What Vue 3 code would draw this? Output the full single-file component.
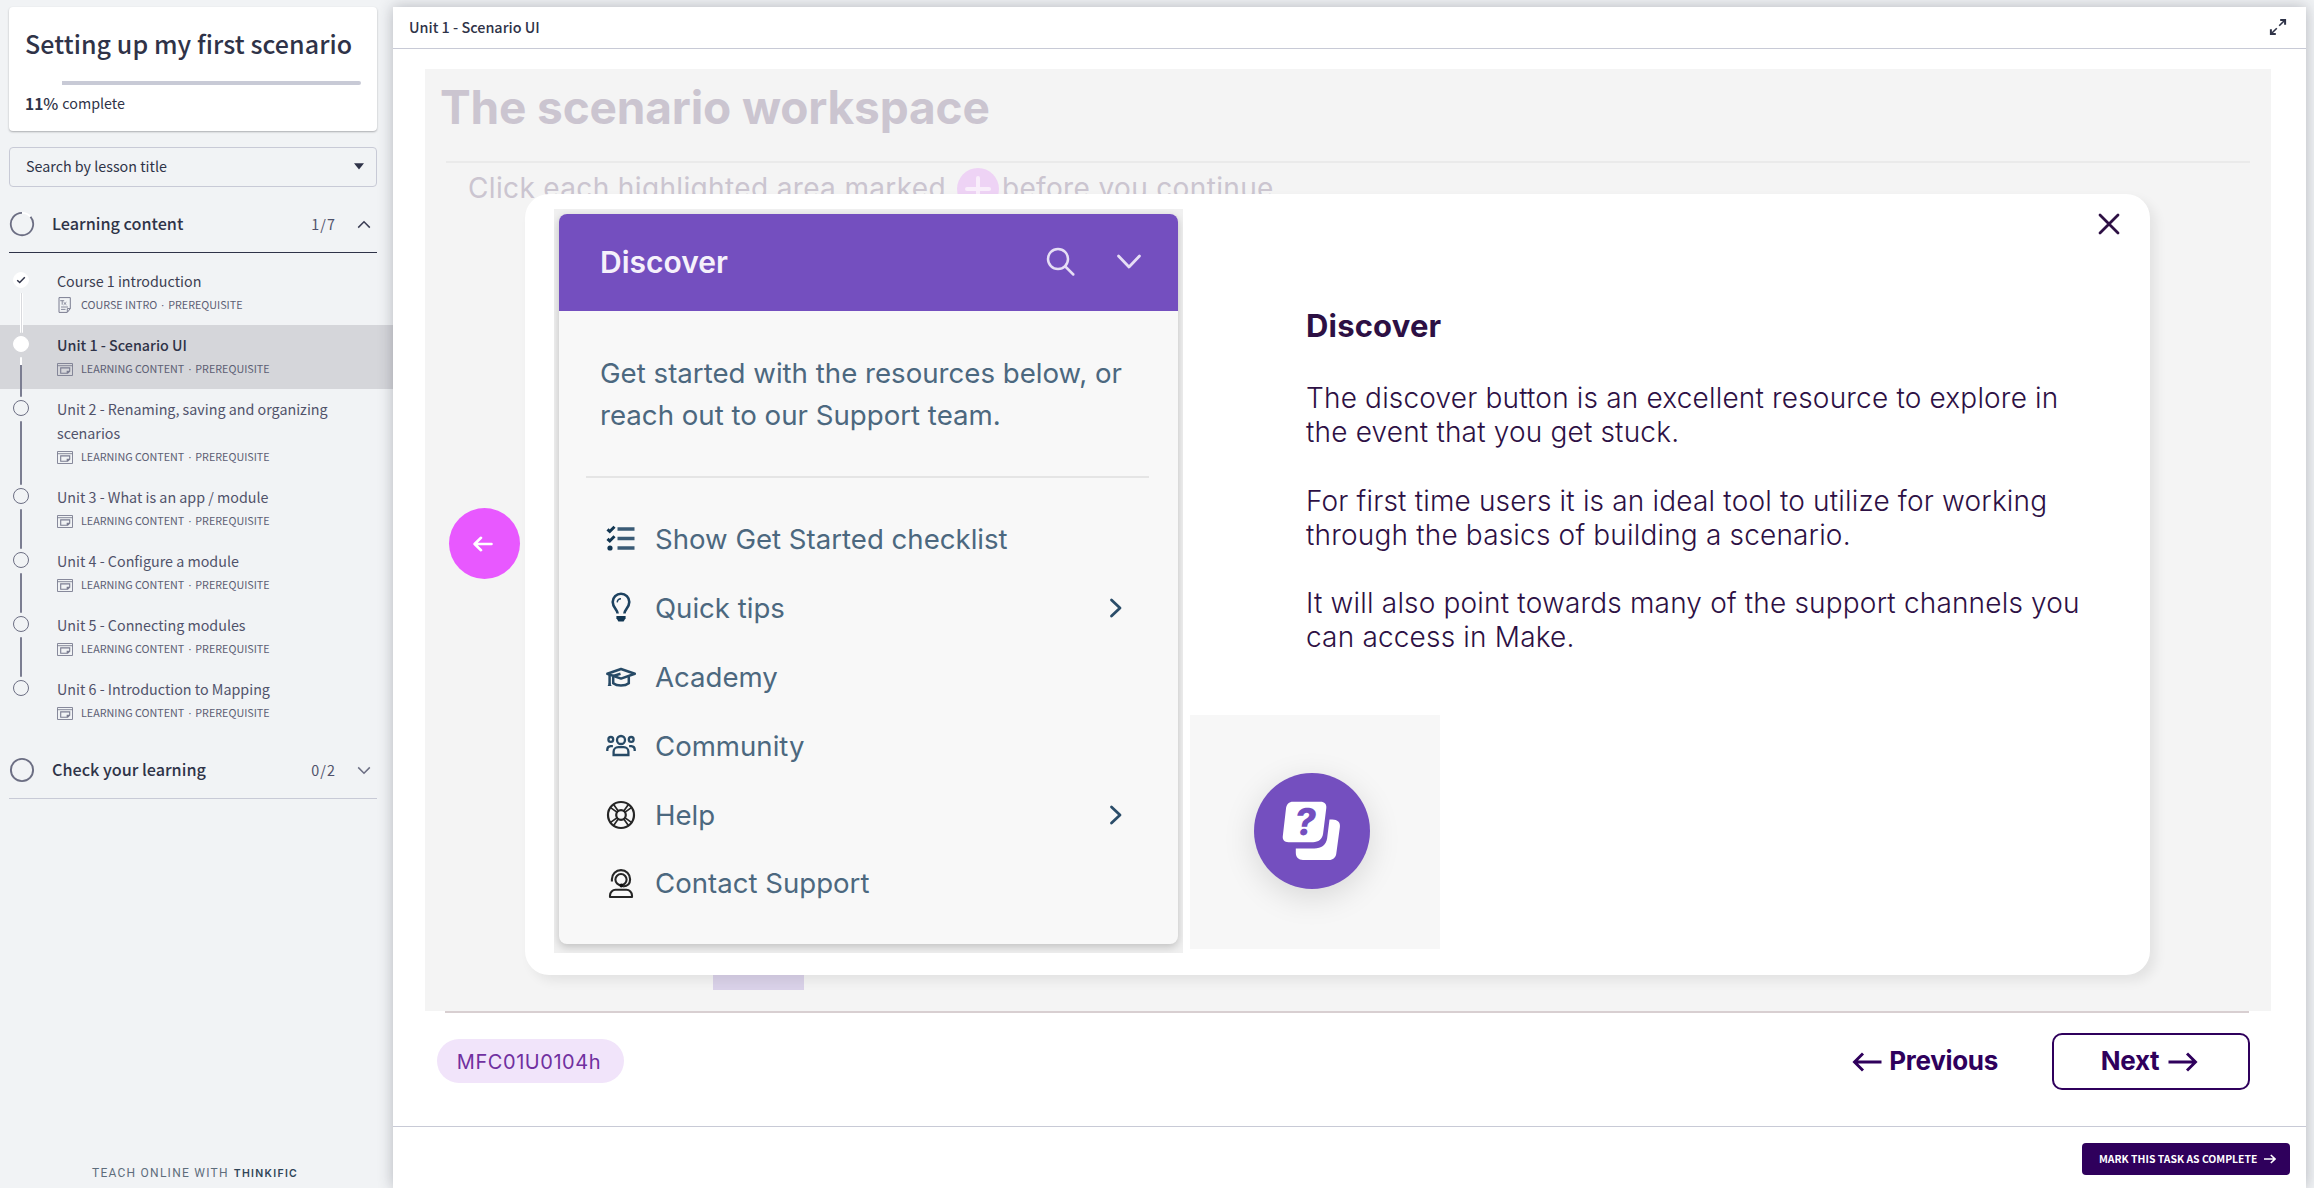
<script setup>
const lessons = [
  { title: 'Course 1 introduction', kind: 'COURSE INTRO', state: 'done' },
  { title: 'Unit 1 - Scenario UI', kind: 'LEARNING CONTENT', state: 'current' },
  { title: 'Unit 2 - Renaming, saving and organizing scenarios', kind: 'LEARNING CONTENT', state: 'open' },
  { title: 'Unit 3 - What is an app / module', kind: 'LEARNING CONTENT', state: 'open' },
  { title: 'Unit 4 - Configure a module', kind: 'LEARNING CONTENT', state: 'open' },
  { title: 'Unit 5 - Connecting modules', kind: 'LEARNING CONTENT', state: 'open' },
  { title: 'Unit 6 - Introduction to Mapping', kind: 'LEARNING CONTENT', state: 'open' }
]

const resources = [
  { label: 'Show Get Started checklist', icon: 'checklist', more: false },
  { label: 'Quick tips', icon: 'bulb', more: true },
  { label: 'Academy', icon: 'academy', more: false },
  { label: 'Community', icon: 'community', more: false },
  { label: 'Help', icon: 'help', more: true },
  { label: 'Contact Support', icon: 'support', more: false }
]
</script>

<template>
  <div class="page">
    <aside class="sidebar">
      <section class="card">
        <h1 class="course">Setting up my first scenario</h1>
        <div class="progress"><div class="progress-rest"></div></div>
        <p class="percent"><b>11</b><span class="sign">%</span><span>complete</span></p>
      </section>

      <div class="search">
        <span>Search by lesson title</span>
        <svg width="10" height="7" viewBox="0 0 10 7"><path d="M0 .3h10L5 6.6z" fill="#2f3348" /></svg>
      </div>

      <header class="chapter chapter-open">
        <svg class="ring" width="26" height="26" viewBox="0 0 26 26">
          <path d="M13 1.8A11.2 11.2 0 1 0 21.4 5.6" fill="none" stroke="#6c6e83" stroke-width="1.8" />
          <path d="M13 1.8A11.2 11.2 0 0 1 21.4 5.6" fill="none" stroke="#fff" stroke-width="1.8" />
        </svg>
        <h2>Learning content</h2>
        <span class="count">1/7</span>
        <svg width="14" height="9" viewBox="0 0 14 9"><path d="M1.2 7.6 7 1.8l5.8 5.8" fill="none" stroke="#3c3e55" stroke-width="1.5" /></svg>
      </header>

      <ul class="lessons">
        <li v-for="(l, i) in lessons" :key="l.title" class="lesson" :class="l.state">
          <div class="rail">
            <span class="dot">
              <svg v-if="l.state === 'done'" width="10" height="8" viewBox="0 0 10 8"><path d="M1.2 4.2 3.7 6.5 8.8 1.3" fill="none" stroke="#2f3348" stroke-width="1.5" /></svg>
            </span>
            <span v-if="i < lessons.length - 1" class="track"></span>
          </div>
          <div class="info">
            <div class="title">{{ l.title }}</div>
            <div class="meta">
              <svg v-if="i === 0" width="16" height="16" viewBox="0 0 16 16" fill="none" stroke="#7b7d91">
                <path d="M2 .6h11.3v11l-3 3.8H2z M10.3 15v-3.4h3" />
                <path d="M3.2 3.7h4M5.2 3.7v4M6.600 5.2l2.8 2.6M9.4 5.2 6.6 7.8M4 10h7M4 12.4h4.5" stroke-width=".9" />
              </svg>
              <svg v-else width="16" height="13" viewBox="0 0 16 13" fill="none" stroke="#7b7d91">
                <path d="M.5.5h15v12H.5zM.5 2.7h15" stroke-width=".9" />
                <path d="M3.7 4.9h9v3.4l-2 1.9h-7zM10.2 10.2V8.4h2.4" stroke-width="1.1" />
              </svg>
              <span>{{ l.kind }}</span><i class="sep">·</i><span>PREREQUISITE</span>
            </div>
          </div>
        </li>
      </ul>

      <header class="chapter chapter-closed">
        <svg class="ring" width="26" height="26" viewBox="0 0 26 26"><circle cx="13" cy="13" r="11.1" fill="none" stroke="#6c6e83" stroke-width="1.9" /></svg>
        <h2>Check your learning</h2>
        <span class="count">0/2</span>
        <svg width="14" height="9" viewBox="0 0 14 9"><path d="M1.2 1.4 7 7.2l5.8-5.8" fill="none" stroke="#6c6e83" stroke-width="1.5" /></svg>
      </header>

      <p class="brand"><span>TEACH ONLINE WITH</span><b>THINKIFIC</b></p>
    </aside>

    <main class="main">
      <header class="topbar">
        <span>Unit 1 - Scenario UI</span>
        <svg width="18" height="18" viewBox="0 0 18 18" fill="none" stroke="#2f3348" stroke-width="1.6">
          <path d="M10.2 7.8 15.8 2.2M2.2 15.8l5.6-5.6" /><path d="M11.2 1.9h4.9v4.9M1.9 11.2v4.9h4.9" stroke-width="2" />
        </svg>
      </header>

      <section class="slide">
        <h2 class="heading">The scenario workspace</h2>
        <div class="rule"></div>
        <p class="hint">
          <span>Click each highlighted area marked</span>
          <svg width="42" height="42" viewBox="0 0 42 42"><circle cx="21" cy="21" r="21" fill="#eed3f5" /><path d="M21 10v22M10 21h22" stroke="#f9eefb" stroke-width="4" stroke-linecap="round" /></svg>
          <span>before you continue</span>
        </p>
        <div class="strip"></div>

        <button class="back" aria-label="Back">
          <svg width="20" height="16" viewBox="0 0 20 16" fill="none" stroke="#fff" stroke-width="2.6" stroke-linecap="round" stroke-linejoin="round"><path d="M18.5 8H2M8 1.8 1.6 8 8 14.2" /></svg>
        </button>

        <div class="modal">
          <div class="frame">
            <div class="panel">
              <div class="panel-head">
                <h3>Discover</h3>
                <svg width="30" height="30" viewBox="0 0 30 30" fill="none" stroke="#e6def5" stroke-width="2.5" stroke-linecap="round"><circle cx="12" cy="12" r="10" /><path d="m19.300 19.500 8 8" /></svg>
                <svg width="26" height="16" viewBox="0 0 26 16" fill="none" stroke="#e6def5" stroke-width="2.800" stroke-linecap="round" stroke-linejoin="round"><path d="M2.500 2 13 13 23.500 2" /></svg>
              </div>
              <p class="intro">Get started with the resources below, or<br />reach out to our Support team.</p>
              <div class="divider"></div>
              <ul class="resources">
                <li v-for="r in resources" :key="r.label">
                  <svg class="icon" width="32" height="32" viewBox="0 0 32 32" fill="none" stroke="#274a66" stroke-width="2.2">
                    <g v-if="r.icon === 'checklist'">
                      <path d="M12.5 6h17M12.5 15.500h17M12.5 25h17" stroke="#3a5b76" stroke-width="3.300" />
                      <path d="m2.500 6.300 2.300 2.200L9.500 3.800M2.500 15.800 4.800 18l4.700-4.700" stroke="#123652" stroke-width="3" />
                      <circle cx="5" cy="25" r="2.600" fill="#123652" stroke="none" />
                    </g>
                    <g v-else-if="r.icon === 'bulb'" stroke="#1d4260">
                      <path d="M12.6 21.5c0-3.5-4.900-6-4.900-11.500a8.300 8.300 0 0 1 16.600 0c0 5.500-4.900 8-4.900 11.500" stroke-width="2.600" />
                      <path d="M12.200 10.400A4 4 0 0 1 16 6.700" stroke-width="1.500" />
                      <path d="M11.400 24h9.200v2.200l-2 3.400h-5.200l-2-3.400z" fill="#123652" stroke="none" />
                    </g>
                    <g v-else-if="r.icon === 'academy'" stroke-width="2.500">
                      <path d="M2.300 12.800 16 8l13.800 4.800L16 17.600z" stroke-linejoin="round" />
                      <path d="M8.200 15.400v6.800c3.800 3 11.800 3 15.600 0v-6.800M4.600 14v9.600M15.500 12.800 8.200 15" />
                      <path d="m4.600 20.400-2 4.600h4z" fill="#274a66" stroke="none" />
                    </g>
                    <g v-else-if="r.icon === 'community'" stroke-width="2.300">
                      <circle cx="16" cy="10" r="4" /><circle cx="5.800" cy="9.400" r="2.400" /><circle cx="26.200" cy="9.400" r="2.400" />
                      <path d="M8.600 25v-3.200a4.600 4.600 0 0 1 4.600-4.600h5.600a4.600 4.600 0 0 1 4.600 4.600V25zM2.300 21v-1.400c0-2 1-3.200 3.400-3.400h2.200M29.700 21v-1.400c0-2-1-3.200-3.400-3.400h-2.200" />
                    </g>
                    <g v-else-if="r.icon === 'help'" stroke="#262626" stroke-width="2.200">
                      <circle cx="16" cy="16" r="13" /><circle cx="16" cy="16" r="4.800" />
                      <path d="m5.600 8.600 7 5M8.600 5.600l5 7M26.400 8.600l-7 5M23.400 5.600l-5 7M5.600 23.400l7-5M8.600 26.400l5-7M26.400 23.400l-7-5M23.400 26.400l-5-7" stroke-width="1.700" />
                    </g>
                    <g v-else stroke="#262626" stroke-width="2.100">
                      <path d="M6.900 14.400v-2.200a9.100 9.100 0 0 1 18.200 0c0 4-2 7-7 7.200" />
                      <circle cx="16" cy="12.600" r="5.600" /><circle cx="16.400" cy="18.600" r="2" fill="#111" stroke="none" />
                      <path d="M5 30v-1.600A5.600 5.600 0 0 1 10.600 22.800h10.800A5.600 5.600 0 0 1 27 28.400V30z" stroke-linejoin="round" />
                    </g>
                  </svg>
                  <span class="label">{{ r.label }}</span>
                  <svg v-if="r.more" width="14" height="20" viewBox="0 0 14 20"><path d="m2.500 2 8.500 8-8.500 8" fill="none" stroke="#2b4d69" stroke-width="2.800" stroke-linecap="round" stroke-linejoin="round" /></svg>
                </li>
              </ul>
            </div>
          </div>

          <div class="column">
            <article class="copy">
              <h3>Discover</h3>
              <p>The discover button is an excellent resource to explore in<br />the event that you get stuck.</p>
              <p>For first time users it is an ideal tool to utilize for working<br />through the basics of building a scenario.</p>
              <p>It will also point towards many of the support channels you<br />can access in Make.</p>
            </article>
            <div class="tile">
              <div class="bubble">
                <svg width="60" height="60" viewBox="0 0 60 60">
                  <path d="M11 .8h27.500c4 0 6.300 2.400 5.800 6.200l-3.200 25.500c-.7 5.500-4.800 8.700-10 8.700H6.500C2.300 41.200.3 38.600.8 35L4 7.500C4.500 3.500 7 .8 11 .8z" fill="#fff" />
                  <path d="M47.500 18.500h2.800c5.200 0 8.200 2.800 7.600 7.500l-3.600 26.500c-.5 4-3.300 6.500-7.300 6.500H21c-4.500 0-7.200-2.800-7.200-7.200v-4.300h18.500c7 0 11.800-3.500 12.800-10z" fill="#fff" />
                </svg>
                <span class="mark">?</span>
              </div>
            </div>
          </div>

          <svg class="close" width="22" height="22" viewBox="0 0 22 22"><path d="m2 2 18 18M20 2 2 20" stroke="#2d1044" stroke-width="2.800" stroke-linecap="round" /></svg>
        </div>
      </section>

      <div class="baseline"></div>
      <nav class="controls">
        <span class="code">MFC01U0104h</span>
        <a class="prev">
          <svg width="30" height="20" viewBox="0 0 30 20" fill="none" stroke="#2f005c" stroke-width="2.900"><path d="M29.500 10H2.500M11 1.500 2.500 10l8.500 8.500" /></svg>
          <span>Previous</span>
        </a>
        <a class="next">
          <span>Next</span>
          <svg width="30" height="20" viewBox="0 0 30 20" fill="none" stroke="#2f005c" stroke-width="2.900"><path d="M.5 10h27M19 1.500l8.500 8.500-8.500 8.500" /></svg>
        </a>
      </nav>

      <footer class="bottom">
        <button class="complete">
          <span>MARK THIS TASK AS COMPLETE</span>
          <svg width="12" height="10" viewBox="0 0 12 10" fill="none" stroke="#fff" stroke-width="1.600"><path d="M0 5h11M6.800 1l4.200 4-4.200 4" /></svg>
        </button>
      </footer>
    </main>
  </div>
</template>

<style>
body { margin: 0; background: #f1f3f5; }
</style>

<style scoped>
* { box-sizing: border-box; }
h1, h2, h3, p, ul { margin: 0; padding: 0; font-weight: inherit; font-size: inherit; }
ul { list-style: none; }
svg { display: block; flex: none; }
span { white-space: nowrap; }
button { border: 0; padding: 0; font: inherit; }

.page {
  display: flex;
  width: 2314px;
  height: 1188px;
  overflow: hidden;
  background: #f1f3f5;
  color: #2f3348;
  font-family: "Noto Sans CJK SC", "Open Sans", sans-serif;
}

/* Sidebar */
.sidebar { width: 393px; flex: none; display: flex; flex-direction: column; padding-top: 7px; }
.card {
  height: 124px; margin: 0 16px 0 9px; padding: 20px 16px 0;
  background: #fff; border-radius: 4px; box-shadow: 0 1px 2px rgba(40, 40, 50, .35);
}
.course { font-size: 25px; line-height: 32px; font-weight: 500; letter-spacing: .080px; white-space: nowrap; }
.progress { height: 4px; margin-top: 22px; padding-left: 37px; }
.progress-rest { height: 4px; background: #c8cad6; border-radius: 0 2px 2px 0; }
.percent { display: flex; margin-top: 6px; font-size: 14.300px; line-height: 24px; }
.percent b { font-weight: 600; font-size: 15.500px; }
.percent .sign { font-size: 16px; font-weight: 500; margin-right: 4px; }
.search {
  display: flex; align-items: center; justify-content: space-between;
  height: 40px; margin: 16px 16px 0 9px; padding: 0 12px 2px 16px;
  border: 1px solid #c8cad6; border-radius: 4px; font-size: 14.300px; line-height: 24px;
}
.chapter { display: flex; align-items: center; height: 57px; margin: 0 16px 0 9px; padding-right: 6px; border-bottom: 1px solid #2f3348; }
.chapter-open { margin-top: 9px; }
.chapter-closed { margin-top: 9px; border-color: #c8cad6; }
.chapter h2 { flex: 1; margin-left: 17px; padding-bottom: 2px; font-size: 16.200px; line-height: 24px; font-weight: 500; }
.count { margin-right: 21px; font-size: 14.300px; letter-spacing: 1.100px; color: #50526a; line-height: 24px; }
.lessons { margin-top: 8px; }
.lesson { display: flex; min-height: 64px; }
.current { background: #d5d6da; }
.rail { position: relative; z-index: 1; width: 16px; flex: none; margin: 11px 28px -8px 13px; display: flex; flex-direction: column; align-items: center; }
.dot { width: 16px; height: 16px; border: 1px solid #6c6e83; border-radius: 50%; display: flex; align-items: center; justify-content: center; flex: none; }
.done .dot, .current .dot { background: #fff; border-color: #fff; }
.track { flex: 1; width: 2px; margin-top: 5px; background: #7b7d91; border-radius: 1px; }
.done .track { width: 3px; background: linear-gradient(90deg, #fff 1px, #d9dade 1px 2px, #fff 2px); }
.current .track { background: linear-gradient(#fff 8px, #7b7d91 8px); }
.info { padding: 8px 60px 8px 0; }
.title { font-size: 14.300px; line-height: 24px; color: #50526a; }
.done .title { color: #3c3e52; }
.current .title { color: #2f3348; font-weight: 500; }
.meta { display: flex; align-items: center; height: 24px; font-size: 10.750px; line-height: 24px; color: #5c5e74; }
.meta svg { margin-right: 8px; }
.sep { font-family: "Open Sans", sans-serif; font-style: normal; width: 11px; text-align: center; }
.brand { display: flex; align-items: center; margin: auto 0 6px 92px; height: 18px; color: #5e6d7c; font: 12px Roboto, sans-serif; letter-spacing: 1.250px; }
.brand b { margin-left: 5px; color: #2f4457; font: 600 10.500px Inter, sans-serif; letter-spacing: 1.300px; }

/* Main area */
.main { width: 1913px; margin-top: 7px; display: flex; flex-direction: column; background: #fff; box-shadow: 0 0 14px rgba(40, 44, 60, .3); }
.topbar { display: flex; align-items: center; justify-content: space-between; height: 42px; padding: 0 19px 1px 16px; border-bottom: 1px solid #c8cad6; font-size: 14.400px; line-height: 24px; font-weight: 500; }
.slide { position: relative; width: 1846px; height: 942px; margin: 20px 0 0 32px; padding: 10px 0 0 15px; background: #f4f4f4; font-family: Inter, sans-serif; }
.heading { font-size: 46px; line-height: 56px; font-weight: 700; letter-spacing: -.150px; color: #cbc5d0; }
.rule { height: 2px; width: 1804px; margin: 26px 0 3px 6px; background: #eaeaea; }
.hint { display: flex; align-items: center; height: 44px; margin-left: 28px; font-size: 28px; line-height: 40px; letter-spacing: .350px; color: #cbc5d0; }
.hint svg { margin: 2px 3px 0 11px; }
.strip { position: absolute; left: 288px; bottom: 21px; width: 91px; height: 40px; background: #dad2e9; }
.back { position: absolute; left: 24px; top: 439px; width: 71px; height: 71px; padding-right: 3px; border-radius: 50%; background: #e858ff; display: flex; align-items: center; justify-content: center; }
.modal { position: absolute; left: 100px; top: 125px; width: 1625px; height: 781px; display: flex; padding: 15px 30px 0 29px; border-radius: 24px; background: #fff; box-shadow: 6px 6px 12px rgba(0, 0, 0, .07); }
.frame { width: 629px; height: 744px; flex: none; padding: 5px 5px 9px; overflow: hidden; background: #f0f0f0; }
.panel { height: 730px; background: #f8f8f8; border-radius: 8px; box-shadow: 0 3px 8px rgba(0, 0, 0, .2); color: #4c687f; }
.panel-head { display: flex; align-items: center; height: 97px; padding: 0 36px 2px 41px; border-radius: 8px 8px 0 0; background: #744fbf; color: #f5f1fb; }
.panel-head h3 { flex: 1; font-size: 30px; line-height: 40px; font-weight: 600; }
.panel-head svg + svg { margin-left: 40px; }
.intro { margin: 41px 0 0 41px; font-size: 27.650px; line-height: 42px; white-space: nowrap; }
.divider { height: 2px; margin: 40px 29px 27px 27px; background: #e5e5e5; }
.resources li { display: flex; align-items: center; height: 68.800px; padding: 0 55px 0 46px; font-size: 27.600px; }
.label { flex: 1; margin-left: 18px; line-height: 42px; }
.column { display: flex; flex-direction: column; justify-content: space-between; margin-left: 7px; padding: 97px 0 26px; }
.copy { margin-left: 116px; font-size: 28px; line-height: 34.200px; font-weight: 300; letter-spacing: .180px; color: #2d1044; white-space: nowrap; }
.copy h3 { margin-bottom: 35px; font-size: 31px; line-height: 40px; font-weight: 700; }
.copy p + p { margin-top: 34.200px; }
.tile { display: flex; align-items: center; justify-content: center; width: 250px; height: 234px; padding: 0 7px 2px 0; background: #f7f7f7; }
.bubble { position: relative; display: flex; align-items: center; justify-content: center; width: 116px; height: 116px; border-radius: 50%; background: #744fbf; box-shadow: 0 8px 32px rgba(0, 0, 0, .13); }
.mark { position: absolute; left: 41px; top: 25px; color: #744fbf; font-size: 37px; line-height: 48px; font-weight: 800; transform: skewX(-7deg); }
.close { position: absolute; right: 30px; top: 19px; }

.baseline { height: 2px; width: 1804px; margin-left: 52px; background: #d8cfd1; }
.controls { display: flex; align-items: center; height: 97px; padding: 0 56px 0 44px; font-family: Inter, sans-serif; color: #2f005c; }
.code { width: 187px; height: 44px; padding-right: 3px; border-radius: 22px; background: #f1e4fa; color: #7030a0; font-size: 20px; line-height: 46px; letter-spacing: .550px; text-align: center; margin-bottom: 1px; }
.prev, .next { display: flex; align-items: center; font-size: 26px; line-height: 34px; font-weight: 700; letter-spacing: -.300px; }
.prev span, .next span { padding-bottom: 2px; }
.prev { margin-left: auto; gap: 7px; }
.next { width: 198px; height: 57px; margin-left: 54px; padding-right: 3px; justify-content: center; gap: 9px; border: 2px solid #2f005c; border-radius: 10px; }
.bottom { display: flex; justify-content: flex-end; margin-top: 16px; padding: 16px 16px 0 0; border-top: 1px solid #c8cad6; }
.complete { display: flex; align-items: center; gap: 7px; width: 208px; height: 32px; padding: 0 0 0 17px; border-radius: 4px; background: #2f005c; color: #fff; font-size: 10.400px; line-height: 24px; font-weight: 700; }
</style>
